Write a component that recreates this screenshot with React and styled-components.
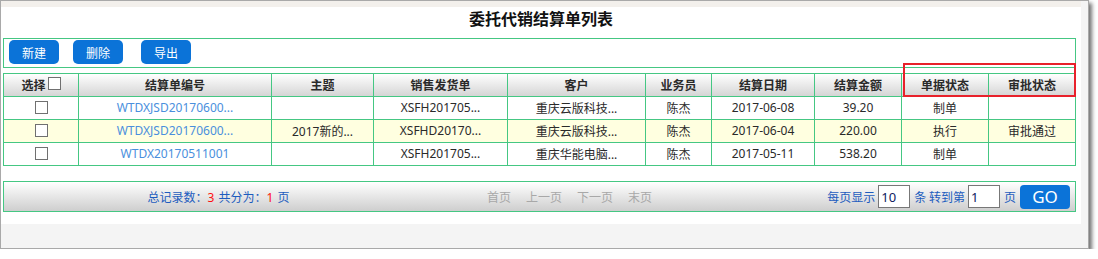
import React from "react";
import styled, { createGlobalStyle } from "styled-components";

const Global = createGlobalStyle`
  html, body { margin: 0; padding: 0; background: #ffffff; }
  body { font-family: "Noto Sans", "Noto Sans CJK SC", sans-serif; font-size: 12px; color: #333; }
  * { box-sizing: border-box; }
`;

const GREEN = "#45c783";
const BLUE = "#0b73d8";

const Window = styled.div`
  width: 1089px;
  height: 249px;
  border: 1px solid #a9a9a9;
  background: #f4f4f4;
  box-shadow: 3px 3px 4px rgba(0, 0, 0, 0.55);
`;

const Panel = styled.div`
  width: 1080px;
  height: 223px;
  background: #ffffff;
  border-top: 6px solid #f3f0ec;
  padding: 0 0 0 2px;
  display: flex;
  flex-direction: column;
`;

const Title = styled.h1`
  margin: 0 0 9px 0;
  height: 22px;
  line-height: 22px;
  font-family: "Noto Sans CJK SC", sans-serif;
  font-size: 16px;
  font-weight: 700;
  color: #111;
  text-align: center;
  padding-right: 2px;
`;

const Toolbar = styled.div`
  width: 1073px;
  height: 30px;
  border: 1px solid ${GREEN};
  padding: 1px 5px;
  display: flex;
  align-items: flex-start;
`;

const Button = styled.button`
  width: 50px;
  height: 24px;
  margin-left: ${(p) => p.$gap || 0}px;
  border: none;
  border-radius: 5px;
  background: ${BLUE};
  color: #ffffff;
  font-family: "Noto Sans CJK SC", sans-serif;
  font-size: 12px;
  padding: 0;
  cursor: pointer;
`;

const TableWrap = styled.div`
  position: relative;
  margin-top: 5px;
  width: 1073px;
  border-left: 1px solid ${GREEN};
  border-top: 1px solid ${GREEN};
`;

const COLS = "75px 193px 102px 134px 138px 66px 103px 87px 87px 87px";

const Row = styled.div`
  display: grid;
  grid-template-columns: ${COLS};
  height: 23px;
  background: ${(p) => (p.$hl ? "#ffffe0" : "#ffffff")};
`;

const HeadRow = styled(Row)`
  background: linear-gradient(#ffffff, #d3d3d3);
`;

const Cell = styled.div`
  border-right: 1px solid ${GREEN};
  border-bottom: 1px solid ${GREEN};
  display: flex;
  align-items: center;
  justify-content: center;
  white-space: nowrap;
  overflow: hidden;
  font-size: 12px;
  color: ${(p) => (p.$link ? "#4a8fdd" : "#2a2a2a")};
  padding-bottom: 1px;
`;

const HeadCell = styled(Cell)`
  font-family: "Noto Sans CJK SC", sans-serif;
  font-weight: 700;
  color: #2a2a2a;
`;

const Check = styled.span`
  display: inline-block;
  width: 13px;
  height: 13px;
  border: 1px solid #707070;
  background: #fff;
  margin-left: ${(p) => p.$ml || 0}px;
  margin-bottom: ${(p) => p.$mb || 0}px;
`;

const Highlight = styled.div`
  position: absolute;
  left: 899px;
  top: -11px;
  width: 173px;
  height: 34px;
  border: 2px solid #e8212b;
  pointer-events: none;
`;

const Pager = styled.div`
  margin-top: 15px;
  width: 1073px;
  height: 31px;
  border: 1px solid ${GREEN};
  background: linear-gradient(#ffffff, #cecece);
  display: grid;
  grid-template-columns: 429px 275px 1fr;
  align-items: center;
  font-family: "Noto Sans CJK SC", sans-serif;
  font-size: 12px;
`;

const Summary = styled.div`
  text-align: center;
  color: #1d5cbe;
`;

const Num = styled.span`
  color: #ff1010;
  font-family: "Noto Sans", sans-serif;
  margin-right: 4px;
`;

const Links = styled.div`
  display: flex;
  justify-content: center;
  gap: 15px;
  color: #a8a8a8;
  padding-right: 2px;
`;

const Right = styled.div`
  display: flex;
  justify-content: flex-end;
  align-items: center;
  padding-right: 5px;
  color: #1d5cbe;
  white-space: nowrap;
`;

const Input = styled.input`
  width: 32px;
  height: 23px;
  border: 1px solid #777;
  margin: 0 4px 0 3px;
  padding: 0 2px;
  font-family: "Noto Sans", sans-serif;
  font-size: 13px;
  color: #102060;
  background: #fff;
  outline: none;
`;

const Go = styled.button`
  width: 50px;
  height: 24px;
  margin-left: 4px;
  border: none;
  border-radius: 4px;
  background: ${BLUE};
  color: #fff;
  font-family: "Noto Sans", sans-serif;
  font-size: 17px;
  padding: 0;
  line-height: 24px;
`;

const rows = [
  ["WTDXJSD20170600...", "", "XSFH201705...", "重庆云版科技...", "陈杰", "2017-06-08", "39.20", "制单", ""],
  ["WTDXJSD20170600...", "2017新的...", "XSFHD20170...", "重庆云版科技...", "陈杰", "2017-06-04", "220.00", "执行", "审批通过"],
  ["WTDX20170511001", "", "XSFH201705...", "重庆华能电脑...", "陈杰", "2017-05-11", "538.20", "制单", ""],
];

const heads = ["结算单编号", "主题", "销售发货单", "客户", "业务员", "结算日期", "结算金额", "单据状态", "审批状态"];

export default function App() {
  return (
    <>
      <Global />
      <Window>
        <Panel>
          <Title>委托代销结算单列表</Title>
          <Toolbar>
            <Button $gap={0}>新建</Button>
            <Button $gap={14}>删除</Button>
            <Button $gap={18}>导出</Button>
          </Toolbar>
          <TableWrap>
            <HeadRow>
              <HeadCell>
                选择<Check $ml={2} $mb={2} />
              </HeadCell>
              {heads.map((h) => (
                <HeadCell key={h}>{h}</HeadCell>
              ))}
            </HeadRow>
            {rows.map((r, i) => (
              <Row key={i} $hl={i === 1}>
                <Cell>
                  <Check />
                </Cell>
                {r.map((v, j) => (
                  <Cell key={j} $link={j === 0}>
                    {v}
                  </Cell>
                ))}
              </Row>
            ))}
            <Highlight />
          </TableWrap>
          <Pager>
            <Summary>
              总记录数：<Num>3</Num>共分为：<Num>1</Num>页
            </Summary>
            <Links>
              <span>首页</span>
              <span>上一页</span>
              <span>下一页</span>
              <span>末页</span>
            </Links>
            <Right>
              每页显示<Input defaultValue="10" />条 转到第<Input defaultValue="1" />页
              <Go>GO</Go>
            </Right>
          </Pager>
        </Panel>
      </Window>
    </>
  );
}
